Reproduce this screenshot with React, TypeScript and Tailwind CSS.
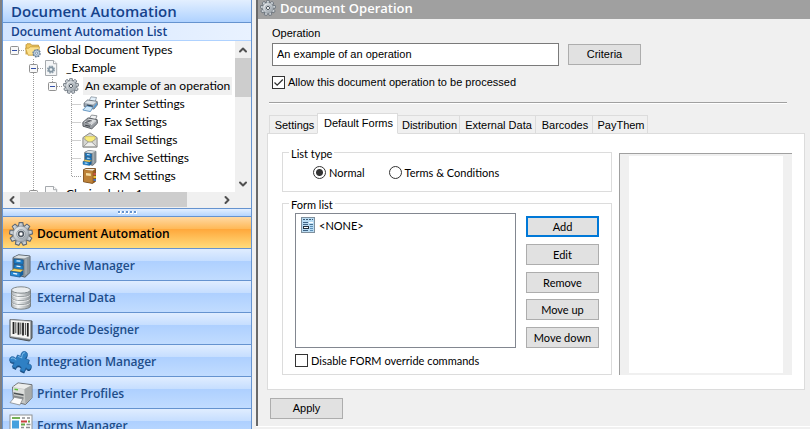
import { ChevronDown, ChevronLeft, ChevronRight, ChevronUp } from "lucide-react";
import { ReactNode, useState } from "react";
import clsx from "clsx";

type IconProps = { className?: string };

const GearIcon = ({ className }: IconProps) => (
  <svg viewBox="0 0 24 24" className={className}>
    <defs>
      <linearGradient id="gear" x1="0" y1="0" x2="1" y2="1">
        <stop offset="0" stopColor="#f7f9fa" />
        <stop offset="0.55" stopColor="#bcc3c9" />
        <stop offset="1" stopColor="#8d959d" />
      </linearGradient>
    </defs>
    {[0, 40, 80, 120, 160, 200, 240, 280, 320].map((angle) => (
      <path
        key={angle}
        d="M9.2 5.5 10.2.6h3.6l1 4.9z"
        fill="url(#gear)"
        stroke="#5f6872"
        strokeWidth="1.1"
        transform={`rotate(${angle} 12 12)`}
      />
    ))}
    <circle cx="12" cy="12" r="7.8" fill="url(#gear)" stroke="#8b939b" strokeWidth="0.6" />
    <circle cx="12" cy="12" r="4.3" fill="#dfe3e6" stroke="#8f979f" strokeWidth="0.9" />
    <circle cx="12" cy="12" r="2.4" fill="#fff" stroke="#4b545e" strokeWidth="1.5" />
  </svg>
);

const FolderIcon = ({ className }: IconProps) => (
  <svg viewBox="0 0 16 16" className={className}>
    <path d="M1 12.5V2.8l1-1h3.5l1.2 1.4h6.8v3" fill="#f0c75e" stroke="#b58a2c" strokeWidth="0.8" />
    <path d="M.5 6.2h3.2L5 4.8h9.5l-1.4 8.4H3z" fill="#fbe08c" stroke="#c79a35" strokeWidth="0.8" />
    <circle cx="11.6" cy="11.2" r="3.4" fill="#b8cde0" stroke="#5f7790" strokeWidth="1.6" strokeDasharray="1.7 0.9" />
    <circle cx="11.6" cy="11.2" r="3" fill="#c3d5e5" stroke="#71889f" strokeWidth="0.6" />
    <circle cx="11.6" cy="11.2" r="1.1" fill="#fff" stroke="#5f7790" strokeWidth="0.7" />
  </svg>
);

const GearDocIcon = ({ className }: IconProps) => (
  <svg viewBox="0 0 16 16" className={className}>
    <path d="M1.5.5h8.2l3 3v12H1.5z" fill="#f5f6f7" stroke="#a5a9ad" />
    <path d="M9.5.5v3.2h3.2" fill="#fff" stroke="#a5a9ad" />
    <circle cx="7" cy="9.5" r="3.3" fill="none" stroke="#93a3af" strokeWidth="1.6" strokeDasharray="1.6 1" />
    <circle cx="7" cy="9.5" r="2.2" fill="#eef3f6" stroke="#8496a3" strokeWidth="1.7" />
  </svg>
);

const PrinterIcon = ({ className }: IconProps) => (
  <svg viewBox="0 0 16 16" className={className}>
    <path d="M7 5 9 .8l5.5.7-1.6 4.8z" fill="#e4f1fb" stroke="#7b8792" strokeWidth="0.7" />
    <path d="M2 7.2 5.5 4l9.6 1.4.4 3.3-3.6 4.4L2.2 10.5z" fill="#9aa5b0" stroke="#56606b" strokeWidth="0.8" />
    <path d="M2.5 7 5.8 4.6l8.7 1.2-3.4 2.8z" fill="#dfe5ea" />
    <path d="M5 8.6 11 9.8l-1 1.6-5.4-1z" fill="#2d3a47" />
    <path d="M4.8 9.8.8 14l7.6 1.6 2.7-4.4z" fill="#cfe8fa" stroke="#4a83b5" strokeWidth="0.8" />
    <path d="M12 10.2 15 7v1.8l-3 3.6z" fill="#4c9bdc" />
  </svg>
);

const FaxIcon = ({ className }: IconProps) => (
  <svg viewBox="0 0 16 16" className={className}>
    <path d="M7 5 9.5 1l5.5.8-2 5z" fill="#f1f2f3" stroke="#777c82" strokeWidth="0.8" />
    <path d="M.8 8.4 6 3.9l9.2 1.8.2 3.6-5.6 5.5L1 12.2z" fill="#9a9ea3" stroke="#4f5459" strokeWidth="0.9" />
    <path d="M1.8 8.3 6.2 4.7l8 1.4-4.9 4z" fill="#dcdee0" />
    <path d="m4 7 4.5.9M5.2 6l4.6.9M6.5 9.1l-3.6-.8" stroke="#50555b" strokeWidth="0.9" />
    <path d="m9 11 5-4.3" stroke="#e9ebec" strokeWidth="0.9" />
    <path d="M3.2 11.2 8 12.3" stroke="#3f4348" strokeWidth="1.1" />
  </svg>
);

const EmailIcon = ({ className }: IconProps) => (
  <svg viewBox="0 0 16 16" className={className}>
    <path d="M.9 5.6 8 .9l7.1 4.7v9.5H.9z" fill="#d6d6d2" stroke="#80807e" strokeWidth="0.9" />
    <path d="M3 4.6h10v3L8 11 3 7.6z" fill="#f8ec7c" stroke="#c8b74a" strokeWidth="0.6" />
    <path d="M1.2 14.8 6.3 10h3.4l5.1 4.8z" fill="#f0f0ee" stroke="#8a8a88" strokeWidth="0.8" />
    <path d="m1 6 5.3 4M15 6l-5.3 4" stroke="#a0a09d" strokeWidth="0.8" />
  </svg>
);

const CabinetIcon = ({ className }: IconProps) => (
  <svg viewBox="0 0 24 24" className={className}>
    <path d="M4 3.5 9.5.8 21 2v16.5L16 23.2 4 20z" fill="#7f8990" stroke="#4d565d" strokeWidth="0.9" />
    <path d="M15 4.2 20.6 2.2v16.2L15 22.9z" fill="#8c959b" />
    <path d="M17 4.5v16" stroke="#a9b1b6" strokeWidth="1.4" />
    <path d="M4.3 3.6 9.5 1.2l11.2 1L15 4.5z" fill="#dbe1e4" />
    <path d="M5 5l9.2 1v4.4L5 9.4zM5 10.4l9.2 1v4.4L5 14.8z" fill="#1f7fc8" stroke="#0f4e86" strokeWidth="0.7" />
    <path d="M7.5 6.8l4 .4M7.5 12.2l4 .4" stroke="#e7f4ff" strokeWidth="1.3" />
    <path d="M1.5 17.2 5 14.8l9.2 1.2-3 2.3z" fill="#f7d868" stroke="#b38b25" strokeWidth="0.6" />
    <path d="M1.5 17.2l9.7 1.3v4.6l-9.7-1.6z" fill="#2488d3" stroke="#0f4e86" strokeWidth="0.7" />
    <path d="M11.2 18.5l3-2.3v4.4l-3 2.5z" fill="#14609f" />
    <path d="M4.2 19.4l4 .6" stroke="#e7f4ff" strokeWidth="1.3" />
  </svg>
);

const CrmIcon = ({ className }: IconProps) => (
  <svg viewBox="0 0 16 16" className={className}>
    <path d="M1.5 1.6 4 .6h9.5v12.8l-3 2-9-1.6z" fill="#9a5c1a" stroke="#6b3d0e" strokeWidth="0.8" />
    <path d="M1.8 1.9 10.6 3v12L1.8 13.6z" fill="#bd8238" />
    <path d="M2 1.7 4 1h9l-2.3 1.7z" fill="#f3ead6" />
    <path d="m4 5 4.8.6v2.5L4 7.4z" fill="#f6dfa5" />
    <path d="M11.5 5H14v2h-2.5z" fill="#c9584a" />
    <path d="M11.5 8H14v2h-2.5z" fill="#e4c23b" />
    <path d="M11.5 11H14v2h-2.5z" fill="#4a73b8" />
  </svg>
);

const DocIcon = ({ className }: IconProps) => (
  <svg viewBox="0 0 16 16" className={className}>
    <path d="M1.5.5h8.2l3 3v12H1.5z" fill="#fafafa" stroke="#a5a9ad" />
    <path d="M9.5.5v3.2h3.2" fill="#fff" stroke="#a5a9ad" />
  </svg>
);

const DatabaseIcon = ({ className }: IconProps) => (
  <svg viewBox="0 0 24 24" className={className}>
    <defs>
      <linearGradient id="db" x1="0" x2="1">
        <stop offset="0" stopColor="#a9aeb1" />
        <stop offset="0.35" stopColor="#f3f5f6" />
        <stop offset="1" stopColor="#8d9396" />
      </linearGradient>
    </defs>
    <path d="M2.5 4v16c0 4.2 19 4.2 19 0V4z" fill="url(#db)" stroke="#7a8184" />
    <path d="M2.5 8c0 3.6 19 3.6 19 0M2.5 12c0 3.6 19 3.6 19 0M2.5 16c0 3.6 19 3.6 19 0" fill="none" stroke="#8b9295" />
    <path d="M3.3 9.2c1.5 3 16 3 17.4 0M3.3 13.2c1.5 3 16 3 17.4 0M3.3 17.2c1.5 3 16 3 17.4 0" fill="none" stroke="#fff" strokeWidth="0.7" />
    <ellipse cx="12" cy="4" rx="9.5" ry="3.2" fill="#e9ecee" stroke="#82898c" />
  </svg>
);

const BarcodeIcon = ({ className }: IconProps) => (
  <svg viewBox="0 0 24 24" className={className}>
    <path d="M1 1.5 23 3v17l-2.5 3L1 19.5z" fill="#777c80" stroke="#4d5256" />
    <path d="M1.5 1.8 21.5 3.3v18L1.5 18.6z" fill="#f6f6f4" stroke="#9b9fa2" strokeWidth="0.7" />
    <path d="M4.5 4v12M9.5 4.5v12.3M14 4.8v12.8M18.8 5v13.4" stroke="#222" strokeWidth="1.8" />
    <path d="M6.8 4.2v11M11.8 4.6v11.8M16.4 5v12" stroke="#222" strokeWidth="0.8" />
  </svg>
);

const puzzlePath =
  "M6 7h3.6C8 3.6 9.2.8 12 .8s4 2.8 2.4 6.2H19v4.2c2.2-1.5 4.6-.6 4.6 2s-2.4 3.6-4.6 2V20h-4.6c.9-1.9.3-3.8-2-3.8s-3.3 1.9-2.3 3.8H6v-4.6c-3 1.4-5.6.4-5.6-2.2S3 9.6 6 11z";

const PuzzleIcon = ({ className }: IconProps) => (
  <svg viewBox="0 0 24 24" className={className}>
    <g transform="rotate(24 12 12)">
      <path d={puzzlePath} fill="#17487a" transform="translate(0.6 1.3)" />
      <path d={puzzlePath} fill="#2f80c4" stroke="#1f5f9c" strokeWidth="0.7" />
      <path d="M7 8h4C9.6 4.6 10.5 2 12 2M1.6 13c.6-1.8 2.6-2 5.4-.6" fill="none" stroke="#7fbbe8" strokeWidth="0.9" />
    </g>
  </svg>
);

const PrinterProfileIcon = ({ className }: IconProps) => (
  <svg viewBox="0 0 24 24" className={className}>
    <path d="M3.5 5 9 .9l14 1.8v13l-6.5 6.8-12-3z" fill="#c6c8c6" stroke="#63676a" strokeWidth="0.9" />
    <path d="M4 5 9.2 1.5 22 3.2 15.6 7z" fill="#ecedec" />
    <path d="M15.6 7 22.4 3.4v12.2l-6 6.2z" fill="#a7aaa9" />
    <path d="M4 5.5 15 7.4v4.8L4 10z" fill="#dcdedc" />
    <path d="M5.5 6.5l3.5.6v1.4l-3.5-.6z" fill="#5ac037" />
    <path d="M5 10.5l9.5 1.8v1.5L5 12z" fill="#4b5053" />
    <path d="M5 13.5l9.5 1.8v2L5 15.4z" fill="#85898b" />
    <path d="M5.5 15.3 13.8 17l-2.9 6L1 20.6z" fill="#fbfbfb" stroke="#85898b" strokeWidth="0.8" />
  </svg>
);

const FormsIcon = ({ className }: IconProps) => (
  <svg viewBox="0 0 24 24" className={className}>
    <rect x="1" y="1" width="22" height="22.5" fill="#fdfdfd" stroke="#8d9194" />
    <path d="M3 4h8" stroke="#65a843" strokeWidth="1.8" />
    <path d="M13 4h3M18 4h3" stroke="#8a8d90" strokeWidth="1.5" />
    <rect x="3" y="6.5" width="7" height="8" fill="#45a1de" />
    <path d="M12 7.5h6" stroke="#c94040" strokeWidth="2" />
    <path d="M19 7.5h2M12 10.5h4" stroke="#65a843" strokeWidth="1.8" />
    <path d="M17.5 10.5h4M12 13.5h3M17 13.5h4" stroke="#8a8d90" strokeWidth="1.5" />
    <path d="M3 17.5h9" stroke="#65a843" strokeWidth="2" />
    <rect x="13.5" y="15.5" width="7.5" height="7" fill="#45a1de" />
    <path d="M3 21h4M8.5 21h3" stroke="#e0a030" strokeWidth="1.8" />
  </svg>
);

const FormItemIcon = ({ className }: IconProps) => (
  <svg viewBox="0 0 14 16" className={className}>
    <rect x="0.5" y="0.5" width="13" height="15" fill="#b9dcf3" stroke="#7f8f9c" />
    <path d="M2 2.5h2M5 2.5h2M8 2.5h2M11 2.5h1" stroke="#3d5a73" />
    <path d="M2 5.5h5M2 7.5h5M2 13.5h5" stroke="#3f6384" />
    <rect x="2.5" y="9.5" width="5" height="2" fill="#fff" stroke="#22303c" />
    <path d="M8 5.5h4" stroke="#fff" />
    <path d="M8.5 7.5H12" stroke="#49708f" />
    <path d="M9 9.5h3M9 11.5h3M9 13.5h3" stroke="#5c8fb8" />
  </svg>
);

// one 19px wide cell of the tree's guide lines
type Guide = "none" | "line" | "tee" | "end" | "root" | "box" | "boxline";

const guidePaths: Record<Guide, string> = {
  none: "",
  line: "M9.5 0V18",
  tee: "M9.5 0V18M9.5 9.5H19",
  end: "M9.5 0V9.5H19",
  root: "M14 9.5H19",
  box: "M9.5 0V5M14 9.5H19",
  boxline: "M9.5 0V5M9.5 14V18M14 9.5H19",
};

const GuideCell = ({ guide }: { guide: Guide }) => (
  <svg width="19" height="18" className="shrink-0">
    <path d={guidePaths[guide]} fill="none" stroke="#a0a0a0" strokeDasharray="1 1" />
    {(guide === "root" || guide === "box" || guide === "boxline") && (
      <>
        <rect x="5.5" y="5.5" width="8" height="8" rx="1" fill="#f8f8f8" stroke="#919191" />
        <path d="M7 9.5h5" stroke="#3450a8" />
      </>
    )}
  </svg>
);

type TreeNode = {
  label: string;
  guides: Guide[];
  icon: ReactNode;
  selected?: boolean;
};

const treeNodes: TreeNode[] = [
  { label: "Global Document Types", guides: ["root"], icon: <FolderIcon className="size-4" /> },
  { label: "_Example", guides: ["none", "boxline"], icon: <GearDocIcon className="size-4" /> },
  {
    label: "An example of an operation",
    guides: ["none", "line", "box"],
    icon: <GearIcon className="size-4" />,
    selected: true,
  },
  { label: "Printer Settings", guides: ["none", "line", "none", "tee"], icon: <PrinterIcon className="size-4" /> },
  { label: "Fax Settings", guides: ["none", "line", "none", "tee"], icon: <FaxIcon className="size-4" /> },
  { label: "Email Settings", guides: ["none", "line", "none", "tee"], icon: <EmailIcon className="size-4" /> },
  { label: "Archive Settings", guides: ["none", "line", "none", "tee"], icon: <CabinetIcon className="size-4" /> },
  { label: "CRM Settings", guides: ["none", "line", "none", "end"], icon: <CrmIcon className="size-4" /> },
  { label: "Closing letter1", guides: ["none", "boxline"], icon: <DocIcon className="size-4" /> },
];

const navItems = [
  { label: "Document Automation", icon: <GearIcon className="size-6" /> },
  { label: "Archive Manager", icon: <CabinetIcon className="size-6" /> },
  { label: "External Data", icon: <DatabaseIcon className="size-6" /> },
  { label: "Barcode Designer", icon: <BarcodeIcon className="size-6" /> },
  { label: "Integration Manager", icon: <PuzzleIcon className="size-6" /> },
  { label: "Printer Profiles", icon: <PrinterProfileIcon className="size-6" /> },
  { label: "Forms Manager", icon: <FormsIcon className="size-6" /> },
];

const Tree = () => (
  <div className="flex flex-col bg-[#f0f0f0]">
    <div className="flex h-[151px]">
      <ul className="min-w-0 flex-1 overflow-hidden bg-white pl-0.5">
        {treeNodes.map((node) => (
          <li key={node.label} className="flex h-[18px] items-center whitespace-nowrap">
            {node.guides.map((guide, i) => (
              <GuideCell key={i} guide={guide} />
            ))}
            <span className="mr-1 ml-px shrink-0">{node.icon}</span>
            <span
              className={clsx(
                "h-[18px] px-0.5 font-['Lato','Open_Sans',sans-serif] text-[12px] leading-[18px] text-black",
                node.selected && "bg-[#f0f0f0]"
              )}
            >
              {node.label}
            </span>
          </li>
        ))}
      </ul>
      <div className="flex w-4 flex-col items-center text-[#505050]">
        <button aria-label="Scroll up" className="flex h-[17px] w-full items-center justify-center">
          <ChevronUp className="size-3" strokeWidth={4} />
        </button>
        <div className="h-[39px] w-full bg-[#cdcdcd]" />
        <button aria-label="Scroll down" className="mt-auto flex h-[17px] w-full items-center justify-center">
          <ChevronDown className="size-3" strokeWidth={4} />
        </button>
      </div>
    </div>
    <div className="flex h-4 items-stretch pr-4 text-[#505050]">
      <button aria-label="Scroll left" className="flex w-[17px] items-center justify-center">
        <ChevronLeft className="size-3" strokeWidth={4} />
      </button>
      <div className="h-[15px] w-[167px] bg-[#cdcdcd]" />
      <button aria-label="Scroll right" className="ml-auto flex w-[17px] items-center justify-center">
        <ChevronRight className="size-3" strokeWidth={4} />
      </button>
    </div>
  </div>
);

const Sidebar = () => {
  const [active, setActive] = useState("Document Automation");
  return (
    <aside className="flex w-[252px] shrink-0 flex-col border-l-2 border-[#808080] font-['Open_Sans','Noto_Sans',sans-serif]">
      <div className="flex flex-1 flex-col border-x border-[#6593cf]">
        <h1 className="h-[23px] border-b border-[#6593cf] bg-linear-to-b from-[#e3efff] to-[#afd2ff] pl-2 text-[15px] leading-[22px] font-semibold text-[#15428b]">
          Document Automation
        </h1>
        <h2 className="h-[18px] border-b border-[#afd2ff] bg-linear-to-r from-[#d3e5ff] to-[#e9f2ff] pl-2 text-[12px] leading-[18px] font-semibold text-[#15428b]">
          Document Automation List
        </h2>
        <Tree />
        <div className="flex h-2 items-center justify-center gap-px border-t border-[#6593cf] bg-linear-to-b from-[#e3efff] to-[#b5d5ff]">
          {[0, 1, 2, 3, 4].map((i) => (
            <span key={i} className="size-[3px] border-r border-b border-white bg-[#6593cf]" />
          ))}
        </div>
        <nav>
          {navItems.map((item) => (
            <button
              key={item.label}
              onClick={() => setActive(item.label)}
              className={clsx(
                "flex h-8 w-full items-center gap-1 border-t border-[#6593cf] pt-0.5 pl-1.5 text-[12px] font-semibold",
                item.label === active
                  ? "bg-[linear-gradient(#ffd9a3,#ffb957_38%,#ffa83c_40%,#ffdc7c)] text-black"
                  : "bg-[linear-gradient(#e0edff,#c6deff_38%,#aed0ff_40%,#c1dcff)] text-[#204d89]"
              )}
            >
              {item.icon}
              {item.label}
            </button>
          ))}
        </nav>
      </div>
    </aside>
  );
};

type ButtonProps = { children: ReactNode; focused?: boolean };

const Button = ({ children, focused }: ButtonProps) => (
  <button
    className={clsx(
      "h-[21px] w-[73px] shrink-0 bg-[#e1e1e1] text-center",
      focused ? "border-2 border-[#0078d7] leading-[17px]" : "border border-[#adadad] leading-[19px]"
    )}
  >
    {children}
  </button>
);

type CheckProps = { label: string; defaultChecked?: boolean };

const CheckBox = ({ label, defaultChecked }: CheckProps) => (
  <label className="flex h-[13px] items-center gap-[3px]">
    <span className="grid size-[13px] shrink-0">
      <input
        type="checkbox"
        defaultChecked={defaultChecked}
        className="peer col-start-1 row-start-1 size-[13px] appearance-none border border-[#333] bg-white"
      />
      <svg viewBox="0 0 13 13" className="pointer-events-none col-start-1 row-start-1 hidden peer-checked:block">
        <path d="M2.5 6.5 5.2 9.2 10.8 3.5" fill="none" stroke="#333" strokeWidth="1.3" />
      </svg>
    </span>
    <span className="leading-[15px]">{label}</span>
  </label>
);

const Radio = ({ label, defaultChecked }: CheckProps) => (
  <label className="flex items-center gap-[3px]">
    <input
      type="radio"
      name="listType"
      defaultChecked={defaultChecked}
      className="size-[13px] appearance-none rounded-full border border-[#333] bg-white checked:bg-[radial-gradient(circle,#333_3px,#fff_4px)]"
    />
    {label}
  </label>
);

const tabs = [
  { name: "Settings", width: "w-[49px]" },
  { name: "Default Forms", width: "w-[81px]" },
  { name: "Distribution", width: "w-[63px]" },
  { name: "External Data", width: "w-[77px]" },
  { name: "Barcodes", width: "w-[58px]" },
  { name: "PayThem", width: "w-[56px]" },
];

const DefaultForms = () => (
  <div className="flex gap-[7px] border border-[#dcdcdc] bg-white pt-3 pr-3 pb-3.5 pl-3.5 font-['Lato','Liberation_Sans',sans-serif]">
    <div className="flex w-[330px] shrink-0 flex-col gap-[5px]">
      <fieldset className="h-[46px] border border-[#dcdcdc] pl-[30px]">
        <legend className="-ml-6 h-[13px] px-0.5 leading-[15px]">List type</legend>
        <div className="flex gap-6 pt-[7px]">
          <Radio label="Normal" defaultChecked />
          <Radio label="Terms & Conditions" />
        </div>
      </fieldset>
      <fieldset className="border border-[#dcdcdc] pr-3 pb-[7px] pl-3">
        <legend className="-ml-1.5 h-[13px] px-0.5 leading-[15px]">Form list</legend>
        <div className="flex gap-2.5 pt-[3px]">
          <ul className="h-[135px] min-w-0 flex-1 border border-[#828790] bg-white px-[5px] py-[3px]">
            <li className="flex items-center gap-1">
              <FormItemIcon className="h-4 w-3.5 shrink-0" />
              &lt;NONE&gt;
            </li>
          </ul>
          <div className="flex flex-col justify-between pt-[3px]">
            <Button focused>Add</Button>
            <Button>Edit</Button>
            <Button>Remove</Button>
            <Button>Move up</Button>
            <Button>Move down</Button>
          </div>
        </div>
        <div className="pt-1.5">
          <CheckBox label="Disable FORM override commands" />
        </div>
      </fieldset>
    </div>
    <div className="mt-[7px] flex min-w-0 flex-1 border-t border-l border-[#a0a0a0] bg-[#f0f0f0] px-[9px] pt-0.5 pb-0.5">
      <div className="flex-1 bg-white" />
    </div>
  </div>
);

const OperationPanel = () => {
  const [activeTab, setActiveTab] = useState("Default Forms");
  return (
    <main className="flex min-w-0 flex-1 flex-col border-l-2 border-[#696969] bg-[#f0f0f0] font-['Liberation_Sans',Arial,sans-serif] text-[11px] leading-[13px] text-black">
      <header className="flex h-[19px] shrink-0 items-start bg-[#a0a0a0] pl-0.5 font-['Open_Sans','Noto_Sans',sans-serif]">
        <GearIcon className="size-4" />
        <h2 className="pl-1 text-[13px] leading-4 font-semibold text-white">Document Operation</h2>
      </header>
      <div className="pt-2 pr-[5px] pl-[9px]">
        <div className="pl-[5px]">
          <label htmlFor="operation" className="block pb-[3px]">
            Operation
          </label>
          <div className="flex items-center gap-[9px]">
            <input
              id="operation"
              defaultValue="An example of an operation"
              className="h-[23px] w-[287px] border border-[#7a7a7a] bg-white px-1 pb-0.5"
            />
            <Button>Criteria</Button>
          </div>
          <div className="flex pt-2.5">
            <CheckBox label="Allow this document operation to be processed" defaultChecked />
          </div>
        </div>
        <div className="mt-[13px] mr-[18px] ml-0.5 h-0.5 border-t border-b border-t-[#a0a0a0] border-b-white" />
        <div role="tablist" className="-mb-px flex items-end pt-[9px] pl-0.5">
          {tabs.map((tab, i) => (
            <button
              key={tab.name}
              role="tab"
              aria-selected={tab.name === activeTab}
              onClick={() => setActiveTab(tab.name)}
              className={clsx(
                "border border-[#dcdcdc] pl-0.5 text-center whitespace-nowrap",
                tab.width,
                i < tabs.length - 1 && "-mr-px",
                tab.name === activeTab ? "z-10 h-[21px] border-b-white bg-white pb-px" : "h-[19px] pt-px"
              )}
            >
              {tab.name}
            </button>
          ))}
        </div>
        <DefaultForms />
        <div className="pt-2 pl-[3px]">
          <Button>Apply</Button>
        </div>
      </div>
    </main>
  );
};

const App = () => {
  return (
    <div className="flex h-screen overflow-hidden bg-[#f0f0f0]">
      <Sidebar />
      <div className="flex min-w-0 flex-1 flex-col pb-0.5 pl-1">
        <OperationPanel />
        <div className="h-px shrink-0 bg-white" />
      </div>
    </div>
  );
};

export default App;
